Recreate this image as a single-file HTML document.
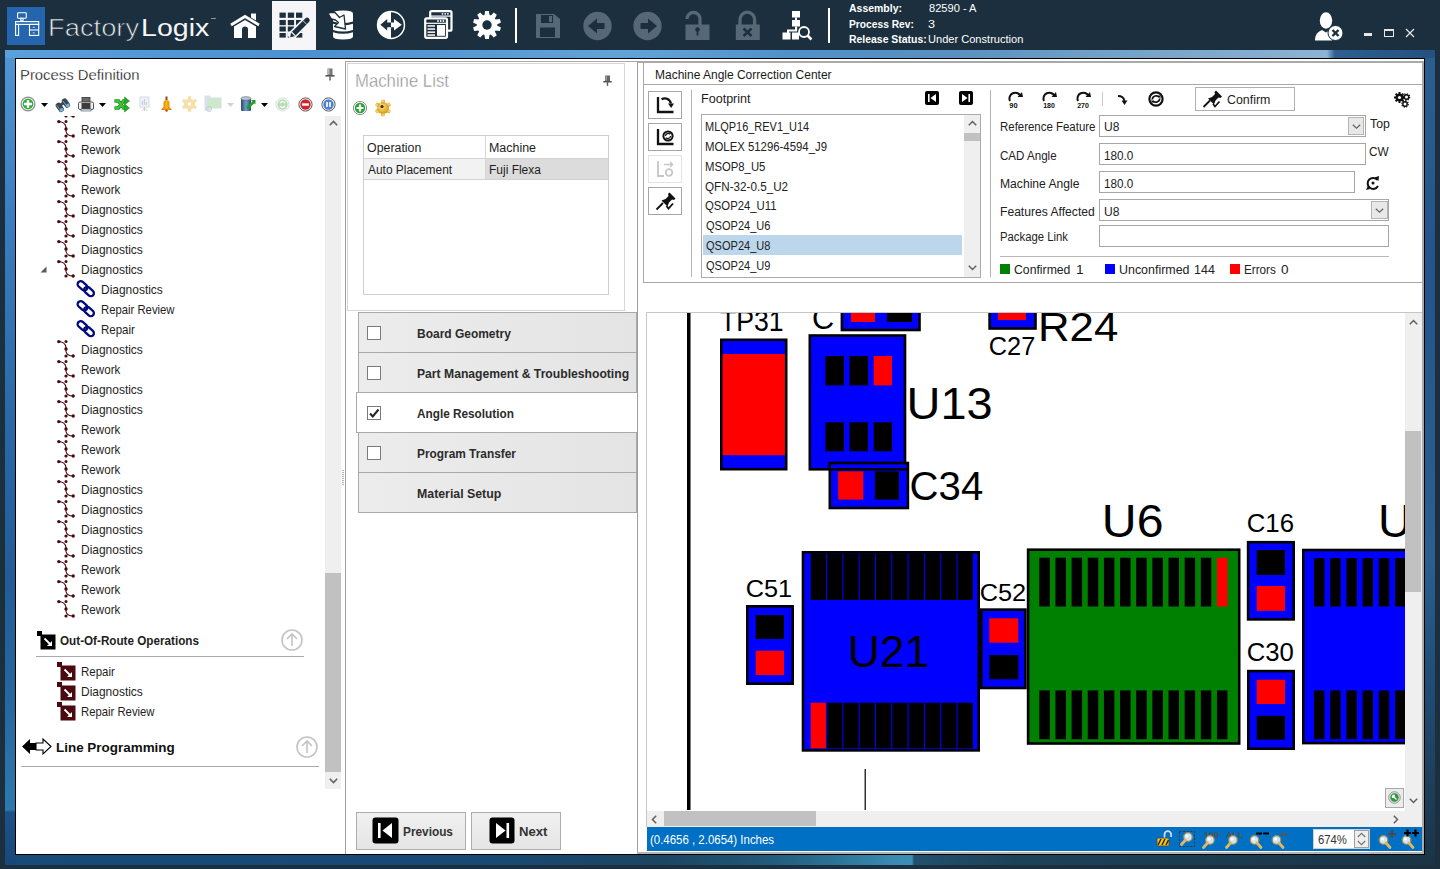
<!DOCTYPE html>
<html><head><meta charset="utf-8">
<style>
*{margin:0;padding:0;box-sizing:border-box}
html,body{width:1440px;height:869px;overflow:hidden;background:#1b2f3e;font-family:"Liberation Sans",sans-serif;color:#1e1e1e}
.a{position:absolute}
.t{position:absolute;white-space:nowrap;line-height:1}
svg{position:absolute;overflow:visible}
</style></head><body>

<!-- ===== TOP BAR ===== -->
<div class="a" style="left:7px;top:7px;width:38px;height:38px;background:#2465ae"></div>
<svg style="left:7px;top:7px" width="38" height="38" viewBox="0 0 38 38">
  <g fill="none" stroke="#fff" stroke-width="1.1">
    <rect x="10.6" y="5.7" width="8.7" height="5.6" rx="0.8"/>
    <rect x="13.8" y="11.3" width="2.2" height="2.6"/>
    <rect x="8.6" y="14.6" width="23.1" height="2.8"/>
    <rect x="8.6" y="17.4" width="3" height="11"/>
    <rect x="22.5" y="17.4" width="9.2" height="11"/>
    <path d="M22.5 23h9.2"/>
  </g>
  <g fill="#fff" opacity="0.8"><rect x="25.8" y="19.8" width="2" height="0.9"/><rect x="25.8" y="25.4" width="2" height="0.9"/></g>
</svg>


<!-- home -->
<svg style="left:230px;top:13px" width="30" height="26" viewBox="0 0 30 26">
  <path fill="#fff" d="M21 0.5h5v7l-5-3z"/>
  <path fill="none" stroke="#fff" stroke-width="2.8" d="M1 12L15 3.5 29 12"/>
  <path fill="#fff" d="M4 13.5L15 7l11 6.5V25h-8v-8.5a3 3 0 0 0-6 0V25H4z"/>
</svg>
<!-- selected tab -->
<div class="a" style="left:272px;top:1px;width:44px;height:49px;background:#f6f6f9"></div>
<svg style="left:279px;top:12px" width="32" height="28" viewBox="0 0 32 28">
  <g fill="#1b2f3e">
    <rect x="0.5" y="0.6" width="6.3" height="5.2"/><rect x="8.8" y="0.6" width="6.3" height="5.2"/><rect x="17" y="0.6" width="6.3" height="5.2"/>
    <rect x="0.5" y="8" width="6.3" height="5.2"/><rect x="8.8" y="8" width="6.3" height="5.2"/><rect x="17" y="8" width="6.3" height="5.2"/>
    <rect x="0.5" y="14.5" width="6.3" height="5"/><rect x="8.8" y="14.5" width="6.3" height="5"/><rect x="17" y="14.5" width="6.3" height="5"/>
    <rect x="0.5" y="21" width="6.3" height="4.6"/><rect x="8.8" y="21" width="6.3" height="4.6"/><rect x="17" y="21" width="6.3" height="4.6"/>
  </g>
  <g transform="translate(20.2 16.2) rotate(-45)">
    <rect x="-13.5" y="-4.2" width="27" height="8.4" rx="2" fill="#f6f6f9"/>
    <path d="M-8 -2.6H11.2a1.8 1.8 0 0 1 0 5.2H-8z" fill="#1b2f3e"/>
    <path d="M-8.8 -2.6L-12.8 0 -8.8 2.6z" fill="#1b2f3e"/>
    <path d="M-7.8 -2.6v5.2" stroke="#f6f6f9" stroke-width="0.8"/>
    <path d="M8 -2.6v5.2" stroke="#f6f6f9" stroke-width="0.8"/>
  </g>
</svg>
<!-- database w/ arrow -->
<svg style="left:326px;top:9px" width="30" height="32" viewBox="0 0 30 32">
  <path fill="#fff" d="M7 4.5Q7 1.5 17 1.5Q27 1.5 27 4.5V12.5Q17 15.5 7 12.5z"/>
  <path fill="#fff" d="M7 14.8Q17 17.8 27 14.8V21Q17 24 7 21z"/>
  <path fill="#fff" d="M7 23.3Q17 26.3 27 23.3V27.5Q27 30.5 17 30.5Q7 30.5 7 27.5z"/>
  <path fill="#fff" stroke="#1b2f3e" stroke-width="1.3" stroke-linejoin="round" d="M2.5 3.5L9 3.5 13.5 8.5 18 6 19.5 20 8.5 17.5 12.5 13.5 9.5 11 5.5 10 3 6z"/>
</svg>
<!-- circle arrows -->
<svg style="left:376px;top:10px" width="30" height="30" viewBox="0 0 30 30">
  <circle cx="15" cy="15" r="14.2" fill="#fff"/>
  <path fill="#1b2f3e" d="M15 2.3a12.7 12.7 0 0 1 0 25.4z"/>
  <path fill="#1b2f3e" d="M4.4 14.8L11.2 9v3.5h3.8v4.8h-3.8v3.3z"/>
  <path fill="#fff" d="M25.8 14.8L18 9v3.5h-3v4.8h3v3.3z"/>
</svg>
<!-- windows -->
<svg style="left:424px;top:10px" width="30" height="30" viewBox="0 0 30 30">
  <rect x="6.2" y="1.2" width="21.3" height="19.5" rx="1.5" fill="#1b2f3e" stroke="#fff" stroke-width="2.2"/>
  <g fill="#fff"><circle cx="18.5" cy="3.8" r="0.9"/><circle cx="21.2" cy="3.8" r="0.9"/><circle cx="23.9" cy="3.8" r="0.9"/><rect x="6.2" y="5.5" width="21.3" height="1.2"/></g>
  <rect x="1.2" y="8.3" width="21.8" height="19.5" rx="1.5" fill="#1b2f3e" stroke="#fff" stroke-width="2.2"/>
  <g fill="#fff"><circle cx="14" cy="11" r="0.9"/><circle cx="16.7" cy="11" r="0.9"/><circle cx="19.4" cy="11" r="0.9"/><rect x="1.2" y="12.7" width="21.8" height="1.2"/></g>
  <g fill="#fff"><rect x="3.5" y="15.2" width="7.5" height="1.5"/><rect x="3.5" y="18.3" width="7.5" height="1.5"/><rect x="3.5" y="21.4" width="7.5" height="1.5"/><rect x="3.5" y="24.3" width="7.5" height="1.5"/><rect x="13" y="15" width="8" height="10.8"/></g>
</svg>
<!-- gear -->
<svg style="left:472px;top:10px" width="30" height="30" viewBox="0 0 30 30">
  <path fill="#fff" d="M12.43 5.34 L13.16 0.92 L16.84 0.92 L17.57 5.34 L18.60 5.67 L21.79 2.53 L24.77 4.69 L22.76 8.69 L23.40 9.57 L27.82 8.90 L28.96 12.40 L24.99 14.46 L24.99 15.54 L28.96 17.60 L27.82 21.10 L23.40 20.43 L22.76 21.31 L24.77 25.31 L21.79 27.47 L18.60 24.33 L17.57 24.66 L16.84 29.08 L13.16 29.08 L12.43 24.66 L11.40 24.33 L8.21 27.47 L5.23 25.31 L7.24 21.31 L6.60 20.43 L2.18 21.10 L1.04 17.60 L5.01 15.54 L5.01 14.46 L1.04 12.40 L2.18 8.90 L6.60 9.57 L7.24 8.69 L5.23 4.69 L8.21 2.53 L11.40 5.67z"/>
  <circle cx="15" cy="15" r="10.2" fill="#fff"/>
  <circle cx="15" cy="15" r="4.7" fill="#1b2f3e"/>
</svg>
<div class="a" style="left:515px;top:8px;width:2px;height:35px;background:#fff"></div>
<!-- disabled: save -->
<svg style="left:535px;top:13px" width="26" height="26" viewBox="0 0 26 26">
  <path fill="#566875" d="M1 1h18l6 5v19H1z"/>
  <rect x="6" y="2" width="12" height="8" fill="#1b2f3e"/><rect x="14" y="3" width="3" height="6" fill="#566875"/>
  <rect x="5" y="14.5" width="15" height="9.5" fill="#1b2f3e"/>
</svg>
<svg style="left:583px;top:11px" width="30" height="30" viewBox="0 0 30 30">
  <circle cx="14.5" cy="15" r="14.2" fill="#566875"/>
  <path fill="#1b2f3e" d="M5 15l9-7.5v4.5h7.5v6h-7.5v4.5z"/>
</svg>
<svg style="left:632px;top:11px" width="30" height="30" viewBox="0 0 30 30">
  <circle cx="15.5" cy="15" r="14.2" fill="#566875"/>
  <path fill="#1b2f3e" d="M25 15l-9-7.5v4.5H8.5v6H16v4.5z"/>
</svg>
<!-- unlock -->
<svg style="left:685px;top:10px" width="26" height="30" viewBox="0 0 26 30">
  <path fill="none" stroke="#566875" stroke-width="3.3" d="M2 9a6.5 6.5 0 0 1 13 0v6"/>
  <rect x="0.5" y="14.5" width="24" height="15.5" fill="#566875"/>
  <circle cx="12.5" cy="19.5" r="2.3" fill="#1b2f3e"/><rect x="11.6" y="20" width="1.8" height="5.5" fill="#1b2f3e"/>
</svg>
<svg style="left:735px;top:10px" width="26" height="30" viewBox="0 0 26 30">
  <path fill="none" stroke="#566875" stroke-width="3.3" d="M5 15V9.5a7.3 7.3 0 0 1 14.6 0V15"/>
  <rect x="0.8" y="14.5" width="24" height="15.5" fill="#566875"/>
  <path stroke="#1b2f3e" stroke-width="2.6" d="M8.5 18.5l8 7.5M16.5 18.5l-8 7.5"/>
</svg>
<!-- org search -->
<svg style="left:782px;top:10px" width="32" height="30" viewBox="0 0 32 30">
  <g fill="#fff">
    <rect x="10" y="1" width="8" height="6.5"/><rect x="13" y="7.5" width="2" height="2.5"/>
    <rect x="10" y="10" width="8" height="6.5"/><rect x="13" y="16.5" width="2.2" height="4"/>
    <rect x="5" y="19.5" width="10" height="2"/><rect x="5" y="21" width="2" height="2.5"/>
    <rect x="0.5" y="22.5" width="8" height="7"/><rect x="10" y="22.5" width="7" height="7"/>
  </g>
  <circle cx="22" cy="22" r="5" fill="#1b2f3e" stroke="#fff" stroke-width="1.8"/>
  <path stroke="#fff" stroke-width="2.5" d="M25.5 25.5l4 4"/>
</svg>
<div class="a" style="left:828px;top:8px;width:2px;height:35px;background:#fff"></div>

<!-- user -->
<svg style="left:1315px;top:12px" width="30" height="30" viewBox="0 0 30 30">
  <ellipse cx="11" cy="8.5" rx="6.2" ry="8.3" fill="#fff"/>
  <path fill="#fff" d="M0 28.5c0-6 3-9 7-10.5l4 2.5 4-2.5c3 1 5 3 6 6l-4 4.5z"/>
  <circle cx="20.5" cy="21" r="7.5" fill="#fff" stroke="#1b2f3e" stroke-width="1"/>
  <path stroke="#1b2f3e" stroke-width="2.4" d="M17.5 18l6 6M23.5 18l-6 6"/>
</svg>
<div class="a" style="left:1364px;top:33px;width:8px;height:3px;background:#e6e6e6"></div>
<div class="a" style="left:1384px;top:29px;width:10px;height:8px;border:1px solid #e6e6e6;border-top-width:2px"></div>
<svg style="left:1405px;top:28px" width="10" height="10" viewBox="0 0 10 10"><path stroke="#e6e6e6" stroke-width="1.2" d="M1 1l8 8M9 1l-8 8"/></svg>

<!-- ===== FRAME ===== -->
<div class="a" style="left:5px;top:50px;width:1430px;height:8px;background:linear-gradient(90deg,#5aa0db 0px,#4b90d0 300px,#62a3d7 620px,#5090ca 795px,#5a90bf 950px,#72a1c7 1100px,#8bb3d4 1322px,#2e5f8f 1330px,#24517f 1430px)"></div>
<div class="a" style="left:5px;top:58px;width:10px;height:807px;background:linear-gradient(180deg,#4f95d3 0px,#3a7fc2 150px,#2a6aa8 350px,#225c98 520px,#25679f 640px,#2c79ad 752px,#1d5189 754px,#184878 807px)"></div>
<div class="a" style="left:1425px;top:58px;width:10px;height:807px;background:linear-gradient(180deg,#2b5e8f 0px,#24548a 200px,#2a5f90 500px,#21507c 600px,#1c3a52 760px,#1b3446 807px)"></div>
<div class="a" style="left:15px;top:855px;width:1410px;height:10px;background:linear-gradient(90deg,#184a7a 0px,#194a76 450px,#1b4562 640px,#1f5676 740px,#2c7398 820px,#3a8bb3 880px,#3c8eb6 897px,#21506e 899px,#1c4259 1000px,#1a3548 1410px)"></div>
<div class="a" style="left:15px;top:58px;width:1410px;height:797px;background:#fff;border:1px solid #000"></div>

<div class="t" style="left:47.81px;top:16.00px;font-size:24.4px;color:#e6ebef;transform:scaleX(1.1206);transform-origin:0 0;-webkit-text-stroke:0.7px #1b2f3e;">Factory</div>
<div class="t" style="left:141.01px;top:16.00px;font-size:24.4px;color:#f4f6f8;transform:scaleX(1.1707);transform-origin:0 0;">Logix</div>
<div class="a" style="left:211px;top:18px;width:5px;height:1px;background:#8a98a4"></div>
<div class="t" style="left:848.94px;top:3.00px;font-size:11px;font-weight:bold;color:#fff;transform:scaleX(0.9524);transform-origin:0 0;">Assembly:</div>
<div class="t" style="left:848.53px;top:19.00px;font-size:11px;font-weight:bold;color:#fff;transform:scaleX(0.9304);transform-origin:0 0;">Process Rev:</div>
<div class="t" style="left:848.52px;top:34.00px;font-size:11px;font-weight:bold;color:#fff;transform:scaleX(0.9484);transform-origin:0 0;">Release Status:</div>
<div class="t" style="left:928.50px;top:3.00px;font-size:11.5px;color:#fff;transform:scaleX(0.9650);transform-origin:0 0;">82590 - A</div>
<div class="t" style="left:928.49px;top:19.00px;font-size:11.5px;color:#fff;transform:scaleX(1.0984);transform-origin:0 0;">3</div>
<div class="t" style="left:928.17px;top:34.00px;font-size:11.5px;color:#fff;transform:scaleX(0.9624);transform-origin:0 0;">Under Construction</div>
<div class="t" style="left:19.81px;top:68.00px;font-size:14.8px;color:#000;transform:scaleX(1.0031);transform-origin:0 0;-webkit-text-stroke:0.3px #fff;">Process Definition</div>
<svg style="left:325px;top:68px" width="10" height="13" viewBox="0 0 10 13"><rect x="2.5" y="0.5" width="5" height="6.5" fill="#777"/><rect x="3" y="1" width="1.5" height="5.5" fill="#bbb"/><rect x="0.5" y="7" width="9" height="1.6" fill="#555"/><rect x="4.3" y="8.5" width="1.4" height="4" fill="#555"/></svg>
<svg style="left:20px;top:96px" width="16" height="16" viewBox="0 0 16 16"><circle cx="8" cy="8" r="6.9" fill="#fff" stroke="#8c8c8c" stroke-width="1.3"/><circle cx="8" cy="8" r="5.4" fill="#2fae3a"/><path d="M8 4v8M4 8h8" stroke="#fff" stroke-width="2.4"/></svg>
<svg style="left:41px;top:103px" width="7" height="4" viewBox="0 0 7 4"><path d="M0 0h7L3.5 4z" fill="#000"/></svg>
<svg style="left:55px;top:97px" width="16" height="15" viewBox="0 0 16 15"><g transform="rotate(-35 8 7.5)"><rect x="1" y="3" width="5.5" height="10" rx="2.5" fill="#3a4650"/><rect x="8.5" y="3" width="5.5" height="10" rx="2.5" fill="#3a4650"/><rect x="5.5" y="5" width="4" height="3" fill="#3a4650"/><ellipse cx="3.75" cy="11" rx="2.2" ry="1.6" fill="#6fb7ea"/><ellipse cx="11.25" cy="11" rx="2.2" ry="1.6" fill="#6fb7ea"/><path d="M2.5 4.5v5M10 4.5v5" stroke="#9aa6b0" stroke-width="0.8"/></g></svg>
<svg style="left:78px;top:97px" width="16" height="15" viewBox="0 0 16 15"><rect x="4" y="0.5" width="8" height="5" fill="#6a6a6a" stroke="#333" stroke-width="0.8"/><rect x="0.5" y="5" width="15" height="7.5" rx="1.5" fill="#f2f2f2" stroke="#444" stroke-width="0.9"/><rect x="3.5" y="6" width="9" height="6" fill="#3c3c3c"/><rect x="3" y="12" width="10" height="2" fill="#cdebf7" stroke="#555" stroke-width="0.6"/></svg>
<svg style="left:99px;top:103px" width="7" height="4" viewBox="0 0 7 4"><path d="M0 0h7L3.5 4z" fill="#000"/></svg>
<svg style="left:113px;top:96px" width="17" height="17" viewBox="0 0 17 17"><path d="M1.5 5h4l5 7h2M1.5 12h4l5-7h2" stroke="#1f8f1f" stroke-width="3.6" fill="none"/><path d="M1.5 5h4l5 7h2M1.5 12h4l5-7h2" stroke="#3cc23c" stroke-width="2" fill="none"/><path d="M11.5 1l5 4-5 4zM11.5 8l5 4-5 4z" fill="#2aa82a" stroke="#1f8f1f" stroke-width="0.6"/></svg>
<svg style="left:139px;top:96px" width="11" height="16" viewBox="0 0 11 16"><rect x="1" y="1" width="9" height="10" fill="#eef3f8" stroke="#d5dde6"/><path d="M3.5 9V5M5.5 9V3M7.5 9V6" stroke="#c7d3df" stroke-width="1.3"/><path d="M5.5 11v4M2.5 15l3-3 3 3" stroke="#ccc" fill="none"/></svg>
<svg style="left:160px;top:96px" width="13" height="16" viewBox="0 0 13 16"><defs><linearGradient id="bl" x1="0" x2="1"><stop offset="0" stop-color="#c86a00"/><stop offset="0.5" stop-color="#ffb21a"/><stop offset="1" stop-color="#d47000"/></linearGradient></defs><rect x="5.5" y="0.5" width="2" height="4" fill="#8a4b1a"/><path d="M3.5 11V7a3 3 0 0 1 6 0v4l2.5 3H1z" fill="url(#bl)"/><circle cx="6.5" cy="14.5" r="1.3" fill="#a85a00"/></svg>
<svg style="left:181px;top:96px" width="17" height="16" viewBox="0 0 17 16"><g transform="translate(8.5 8)" fill="#f6dfab"><circle r="5.6"/><g id="lg"><rect x="-1.6" y="-7.8" width="3.2" height="3.5"/></g><use href="#lg" transform="rotate(60)"/><use href="#lg" transform="rotate(120)"/><use href="#lg" transform="rotate(180)"/><use href="#lg" transform="rotate(240)"/><use href="#lg" transform="rotate(300)"/></g><circle cx="8.5" cy="8" r="1.8" fill="#fff"/></svg>
<svg style="left:204px;top:95px" width="18" height="17" viewBox="0 0 18 17"><rect x="0.5" y="0.5" width="6" height="15" fill="#d7e2ee"/><rect x="4" y="3" width="13" height="10" fill="#cbeac9" stroke="#d6dde4"/><circle cx="5" cy="14" r="2.5" fill="none" stroke="#ccc"/></svg>
<svg style="left:227px;top:103px" width="7" height="4" viewBox="0 0 7 4"><path d="M0 0h7L3.5 4z" fill="#d0d0d0"/></svg>
<svg style="left:240px;top:96px" width="16" height="16" viewBox="0 0 16 16"><defs><linearGradient id="db" x1="0" x2="1"><stop offset="0" stop-color="#2d4a6a"/><stop offset="0.5" stop-color="#6aa0d0"/><stop offset="1" stop-color="#2a4d70"/></linearGradient></defs><rect x="1" y="2" width="10" height="13" rx="1" fill="url(#db)"/><ellipse cx="6" cy="2.5" rx="5" ry="1.8" fill="#b9c9d9" stroke="#555" stroke-width="0.6"/><path d="M7 12l7-6" stroke="#1ea01e" stroke-width="2.4"/><path d="M11 4h4.5v4.5z" fill="#1ea01e"/></svg>
<svg style="left:261px;top:103px" width="7" height="4" viewBox="0 0 7 4"><path d="M0 0h7L3.5 4z" fill="#000"/></svg>
<svg style="left:275px;top:97px" width="15" height="15" viewBox="0 0 15 15"><g opacity="0.75"><circle cx="7.5" cy="7.5" r="6.6" fill="#fff" stroke="#cfcfcf" stroke-width="1"/><circle cx="7.5" cy="7.5" r="5.2" fill="#9fd39f"/><path d="M5 6a3 3 0 0 1 5 0M10 9a3 3 0 0 1-5 0" stroke="#fff" stroke-width="1.4" fill="none"/></g></svg>
<svg style="left:298px;top:97px" width="15" height="15" viewBox="0 0 15 15"><g opacity="1"><circle cx="7.5" cy="7.5" r="6.6" fill="#fff" stroke="#555" stroke-width="1"/><circle cx="7.5" cy="7.5" r="5.2" fill="#d8202a"/><path d="M4 7.5h7" stroke="#fff" stroke-width="2.4"/></g></svg>
<svg style="left:321px;top:97px" width="15" height="15" viewBox="0 0 15 15"><g opacity="1"><circle cx="7.5" cy="7.5" r="6.6" fill="#fff" stroke="#555" stroke-width="1"/><circle cx="7.5" cy="7.5" r="5.2" fill="#4d7fd6"/><path d="M6 5v5M9 5v5" stroke="#fff" stroke-width="1.7"/></g></svg>
<div class="a" style="left:16px;top:116px;width:309px;height:511px;overflow:hidden">
<svg style="left:41px;top:-16px" width="19" height="19" viewBox="0 0 19 19"><g fill="none" stroke="#4a0a0e" stroke-width="1.1"><path d="M1.8 1.6C5 1.6 8.5 3.5 9 7.5v4C9.5 14 12 16 16.2 16"/></g><g fill="#4a0a0e"><circle cx="1.8" cy="1.6" r="1.7"/><circle cx="9" cy="1.6" r="1.5"/><circle cx="9" cy="9" r="1.7"/><circle cx="9" cy="16" r="1.6"/><circle cx="16.2" cy="16" r="1.7"/></g></svg>
<svg style="left:41px;top:4px" width="19" height="19" viewBox="0 0 19 19"><g fill="none" stroke="#4a0a0e" stroke-width="1.1"><path d="M1.8 1.6C5 1.6 8.5 3.5 9 7.5v4C9.5 14 12 16 16.2 16"/></g><g fill="#4a0a0e"><circle cx="1.8" cy="1.6" r="1.7"/><circle cx="9" cy="1.6" r="1.5"/><circle cx="9" cy="9" r="1.7"/><circle cx="9" cy="16" r="1.6"/><circle cx="16.2" cy="16" r="1.7"/></g></svg>
<div class="t" style="left:64.77px;top:8.00px;font-size:12.6px;color:#1e1e1e;transform:scaleX(0.9207);transform-origin:0 0;">Rework</div>
<svg style="left:41px;top:24px" width="19" height="19" viewBox="0 0 19 19"><g fill="none" stroke="#4a0a0e" stroke-width="1.1"><path d="M1.8 1.6C5 1.6 8.5 3.5 9 7.5v4C9.5 14 12 16 16.2 16"/></g><g fill="#4a0a0e"><circle cx="1.8" cy="1.6" r="1.7"/><circle cx="9" cy="1.6" r="1.5"/><circle cx="9" cy="9" r="1.7"/><circle cx="9" cy="16" r="1.6"/><circle cx="16.2" cy="16" r="1.7"/></g></svg>
<div class="t" style="left:64.77px;top:28.00px;font-size:12.6px;color:#1e1e1e;transform:scaleX(0.9207);transform-origin:0 0;">Rework</div>
<svg style="left:41px;top:44px" width="19" height="19" viewBox="0 0 19 19"><g fill="none" stroke="#4a0a0e" stroke-width="1.1"><path d="M1.8 1.6C5 1.6 8.5 3.5 9 7.5v4C9.5 14 12 16 16.2 16"/></g><g fill="#4a0a0e"><circle cx="1.8" cy="1.6" r="1.7"/><circle cx="9" cy="1.6" r="1.5"/><circle cx="9" cy="9" r="1.7"/><circle cx="9" cy="16" r="1.6"/><circle cx="16.2" cy="16" r="1.7"/></g></svg>
<div class="t" style="left:64.74px;top:48.00px;font-size:12.6px;color:#1e1e1e;transform:scaleX(0.9499);transform-origin:0 0;">Diagnostics</div>
<svg style="left:41px;top:64px" width="19" height="19" viewBox="0 0 19 19"><g fill="none" stroke="#4a0a0e" stroke-width="1.1"><path d="M1.8 1.6C5 1.6 8.5 3.5 9 7.5v4C9.5 14 12 16 16.2 16"/></g><g fill="#4a0a0e"><circle cx="1.8" cy="1.6" r="1.7"/><circle cx="9" cy="1.6" r="1.5"/><circle cx="9" cy="9" r="1.7"/><circle cx="9" cy="16" r="1.6"/><circle cx="16.2" cy="16" r="1.7"/></g></svg>
<div class="t" style="left:64.77px;top:68.00px;font-size:12.6px;color:#1e1e1e;transform:scaleX(0.9207);transform-origin:0 0;">Rework</div>
<svg style="left:41px;top:84px" width="19" height="19" viewBox="0 0 19 19"><g fill="none" stroke="#4a0a0e" stroke-width="1.1"><path d="M1.8 1.6C5 1.6 8.5 3.5 9 7.5v4C9.5 14 12 16 16.2 16"/></g><g fill="#4a0a0e"><circle cx="1.8" cy="1.6" r="1.7"/><circle cx="9" cy="1.6" r="1.5"/><circle cx="9" cy="9" r="1.7"/><circle cx="9" cy="16" r="1.6"/><circle cx="16.2" cy="16" r="1.7"/></g></svg>
<div class="t" style="left:64.74px;top:88.00px;font-size:12.6px;color:#1e1e1e;transform:scaleX(0.9499);transform-origin:0 0;">Diagnostics</div>
<svg style="left:41px;top:104px" width="19" height="19" viewBox="0 0 19 19"><g fill="none" stroke="#4a0a0e" stroke-width="1.1"><path d="M1.8 1.6C5 1.6 8.5 3.5 9 7.5v4C9.5 14 12 16 16.2 16"/></g><g fill="#4a0a0e"><circle cx="1.8" cy="1.6" r="1.7"/><circle cx="9" cy="1.6" r="1.5"/><circle cx="9" cy="9" r="1.7"/><circle cx="9" cy="16" r="1.6"/><circle cx="16.2" cy="16" r="1.7"/></g></svg>
<div class="t" style="left:64.74px;top:108.00px;font-size:12.6px;color:#1e1e1e;transform:scaleX(0.9499);transform-origin:0 0;">Diagnostics</div>
<svg style="left:41px;top:124px" width="19" height="19" viewBox="0 0 19 19"><g fill="none" stroke="#4a0a0e" stroke-width="1.1"><path d="M1.8 1.6C5 1.6 8.5 3.5 9 7.5v4C9.5 14 12 16 16.2 16"/></g><g fill="#4a0a0e"><circle cx="1.8" cy="1.6" r="1.7"/><circle cx="9" cy="1.6" r="1.5"/><circle cx="9" cy="9" r="1.7"/><circle cx="9" cy="16" r="1.6"/><circle cx="16.2" cy="16" r="1.7"/></g></svg>
<div class="t" style="left:64.74px;top:128.00px;font-size:12.6px;color:#1e1e1e;transform:scaleX(0.9499);transform-origin:0 0;">Diagnostics</div>
<svg style="left:41px;top:144px" width="19" height="19" viewBox="0 0 19 19"><g fill="none" stroke="#4a0a0e" stroke-width="1.1"><path d="M1.8 1.6C5 1.6 8.5 3.5 9 7.5v4C9.5 14 12 16 16.2 16"/></g><g fill="#4a0a0e"><circle cx="1.8" cy="1.6" r="1.7"/><circle cx="9" cy="1.6" r="1.5"/><circle cx="9" cy="9" r="1.7"/><circle cx="9" cy="16" r="1.6"/><circle cx="16.2" cy="16" r="1.7"/></g></svg>
<div class="t" style="left:64.74px;top:148.00px;font-size:12.6px;color:#1e1e1e;transform:scaleX(0.9499);transform-origin:0 0;">Diagnostics</div>
<svg style="left:61px;top:164px" width="20" height="18" viewBox="0 0 20 18"><g fill="none" stroke="#000a7a" stroke-width="2.3"><rect x="-5.5" y="-3.1" width="11" height="6.2" rx="3.1" transform="translate(5.5 5.8) rotate(42)"/><rect x="-5.5" y="-3.1" width="11" height="6.2" rx="3.1" transform="translate(12 11.5) rotate(42)"/></g></svg>
<div class="t" style="left:84.54px;top:168.00px;font-size:12.6px;color:#1e1e1e;transform:scaleX(0.9499);transform-origin:0 0;">Diagnostics</div>
<svg style="left:61px;top:184px" width="20" height="18" viewBox="0 0 20 18"><g fill="none" stroke="#000a7a" stroke-width="2.3"><rect x="-5.5" y="-3.1" width="11" height="6.2" rx="3.1" transform="translate(5.5 5.8) rotate(42)"/><rect x="-5.5" y="-3.1" width="11" height="6.2" rx="3.1" transform="translate(12 11.5) rotate(42)"/></g></svg>
<div class="t" style="left:84.59px;top:188.00px;font-size:12.6px;color:#1e1e1e;transform:scaleX(0.8980);transform-origin:0 0;">Repair Review</div>
<svg style="left:61px;top:204px" width="20" height="18" viewBox="0 0 20 18"><g fill="none" stroke="#000a7a" stroke-width="2.3"><rect x="-5.5" y="-3.1" width="11" height="6.2" rx="3.1" transform="translate(5.5 5.8) rotate(42)"/><rect x="-5.5" y="-3.1" width="11" height="6.2" rx="3.1" transform="translate(12 11.5) rotate(42)"/></g></svg>
<div class="t" style="left:84.58px;top:208.00px;font-size:12.6px;color:#1e1e1e;transform:scaleX(0.9134);transform-origin:0 0;">Repair</div>
<svg style="left:41px;top:224px" width="19" height="19" viewBox="0 0 19 19"><g fill="none" stroke="#4a0a0e" stroke-width="1.1"><path d="M1.8 1.6C5 1.6 8.5 3.5 9 7.5v4C9.5 14 12 16 16.2 16"/></g><g fill="#4a0a0e"><circle cx="1.8" cy="1.6" r="1.7"/><circle cx="9" cy="1.6" r="1.5"/><circle cx="9" cy="9" r="1.7"/><circle cx="9" cy="16" r="1.6"/><circle cx="16.2" cy="16" r="1.7"/></g></svg>
<div class="t" style="left:64.74px;top:228.00px;font-size:12.6px;color:#1e1e1e;transform:scaleX(0.9499);transform-origin:0 0;">Diagnostics</div>
<svg style="left:41px;top:244px" width="19" height="19" viewBox="0 0 19 19"><g fill="none" stroke="#4a0a0e" stroke-width="1.1"><path d="M1.8 1.6C5 1.6 8.5 3.5 9 7.5v4C9.5 14 12 16 16.2 16"/></g><g fill="#4a0a0e"><circle cx="1.8" cy="1.6" r="1.7"/><circle cx="9" cy="1.6" r="1.5"/><circle cx="9" cy="9" r="1.7"/><circle cx="9" cy="16" r="1.6"/><circle cx="16.2" cy="16" r="1.7"/></g></svg>
<div class="t" style="left:64.77px;top:248.00px;font-size:12.6px;color:#1e1e1e;transform:scaleX(0.9207);transform-origin:0 0;">Rework</div>
<svg style="left:41px;top:264px" width="19" height="19" viewBox="0 0 19 19"><g fill="none" stroke="#4a0a0e" stroke-width="1.1"><path d="M1.8 1.6C5 1.6 8.5 3.5 9 7.5v4C9.5 14 12 16 16.2 16"/></g><g fill="#4a0a0e"><circle cx="1.8" cy="1.6" r="1.7"/><circle cx="9" cy="1.6" r="1.5"/><circle cx="9" cy="9" r="1.7"/><circle cx="9" cy="16" r="1.6"/><circle cx="16.2" cy="16" r="1.7"/></g></svg>
<div class="t" style="left:64.74px;top:268.00px;font-size:12.6px;color:#1e1e1e;transform:scaleX(0.9499);transform-origin:0 0;">Diagnostics</div>
<svg style="left:41px;top:284px" width="19" height="19" viewBox="0 0 19 19"><g fill="none" stroke="#4a0a0e" stroke-width="1.1"><path d="M1.8 1.6C5 1.6 8.5 3.5 9 7.5v4C9.5 14 12 16 16.2 16"/></g><g fill="#4a0a0e"><circle cx="1.8" cy="1.6" r="1.7"/><circle cx="9" cy="1.6" r="1.5"/><circle cx="9" cy="9" r="1.7"/><circle cx="9" cy="16" r="1.6"/><circle cx="16.2" cy="16" r="1.7"/></g></svg>
<div class="t" style="left:64.74px;top:288.00px;font-size:12.6px;color:#1e1e1e;transform:scaleX(0.9499);transform-origin:0 0;">Diagnostics</div>
<svg style="left:41px;top:304px" width="19" height="19" viewBox="0 0 19 19"><g fill="none" stroke="#4a0a0e" stroke-width="1.1"><path d="M1.8 1.6C5 1.6 8.5 3.5 9 7.5v4C9.5 14 12 16 16.2 16"/></g><g fill="#4a0a0e"><circle cx="1.8" cy="1.6" r="1.7"/><circle cx="9" cy="1.6" r="1.5"/><circle cx="9" cy="9" r="1.7"/><circle cx="9" cy="16" r="1.6"/><circle cx="16.2" cy="16" r="1.7"/></g></svg>
<div class="t" style="left:64.77px;top:308.00px;font-size:12.6px;color:#1e1e1e;transform:scaleX(0.9207);transform-origin:0 0;">Rework</div>
<svg style="left:41px;top:324px" width="19" height="19" viewBox="0 0 19 19"><g fill="none" stroke="#4a0a0e" stroke-width="1.1"><path d="M1.8 1.6C5 1.6 8.5 3.5 9 7.5v4C9.5 14 12 16 16.2 16"/></g><g fill="#4a0a0e"><circle cx="1.8" cy="1.6" r="1.7"/><circle cx="9" cy="1.6" r="1.5"/><circle cx="9" cy="9" r="1.7"/><circle cx="9" cy="16" r="1.6"/><circle cx="16.2" cy="16" r="1.7"/></g></svg>
<div class="t" style="left:64.77px;top:328.00px;font-size:12.6px;color:#1e1e1e;transform:scaleX(0.9207);transform-origin:0 0;">Rework</div>
<svg style="left:41px;top:344px" width="19" height="19" viewBox="0 0 19 19"><g fill="none" stroke="#4a0a0e" stroke-width="1.1"><path d="M1.8 1.6C5 1.6 8.5 3.5 9 7.5v4C9.5 14 12 16 16.2 16"/></g><g fill="#4a0a0e"><circle cx="1.8" cy="1.6" r="1.7"/><circle cx="9" cy="1.6" r="1.5"/><circle cx="9" cy="9" r="1.7"/><circle cx="9" cy="16" r="1.6"/><circle cx="16.2" cy="16" r="1.7"/></g></svg>
<div class="t" style="left:64.77px;top:348.00px;font-size:12.6px;color:#1e1e1e;transform:scaleX(0.9207);transform-origin:0 0;">Rework</div>
<svg style="left:41px;top:364px" width="19" height="19" viewBox="0 0 19 19"><g fill="none" stroke="#4a0a0e" stroke-width="1.1"><path d="M1.8 1.6C5 1.6 8.5 3.5 9 7.5v4C9.5 14 12 16 16.2 16"/></g><g fill="#4a0a0e"><circle cx="1.8" cy="1.6" r="1.7"/><circle cx="9" cy="1.6" r="1.5"/><circle cx="9" cy="9" r="1.7"/><circle cx="9" cy="16" r="1.6"/><circle cx="16.2" cy="16" r="1.7"/></g></svg>
<div class="t" style="left:64.74px;top:368.00px;font-size:12.6px;color:#1e1e1e;transform:scaleX(0.9499);transform-origin:0 0;">Diagnostics</div>
<svg style="left:41px;top:384px" width="19" height="19" viewBox="0 0 19 19"><g fill="none" stroke="#4a0a0e" stroke-width="1.1"><path d="M1.8 1.6C5 1.6 8.5 3.5 9 7.5v4C9.5 14 12 16 16.2 16"/></g><g fill="#4a0a0e"><circle cx="1.8" cy="1.6" r="1.7"/><circle cx="9" cy="1.6" r="1.5"/><circle cx="9" cy="9" r="1.7"/><circle cx="9" cy="16" r="1.6"/><circle cx="16.2" cy="16" r="1.7"/></g></svg>
<div class="t" style="left:64.74px;top:388.00px;font-size:12.6px;color:#1e1e1e;transform:scaleX(0.9499);transform-origin:0 0;">Diagnostics</div>
<svg style="left:41px;top:404px" width="19" height="19" viewBox="0 0 19 19"><g fill="none" stroke="#4a0a0e" stroke-width="1.1"><path d="M1.8 1.6C5 1.6 8.5 3.5 9 7.5v4C9.5 14 12 16 16.2 16"/></g><g fill="#4a0a0e"><circle cx="1.8" cy="1.6" r="1.7"/><circle cx="9" cy="1.6" r="1.5"/><circle cx="9" cy="9" r="1.7"/><circle cx="9" cy="16" r="1.6"/><circle cx="16.2" cy="16" r="1.7"/></g></svg>
<div class="t" style="left:64.74px;top:408.00px;font-size:12.6px;color:#1e1e1e;transform:scaleX(0.9499);transform-origin:0 0;">Diagnostics</div>
<svg style="left:41px;top:424px" width="19" height="19" viewBox="0 0 19 19"><g fill="none" stroke="#4a0a0e" stroke-width="1.1"><path d="M1.8 1.6C5 1.6 8.5 3.5 9 7.5v4C9.5 14 12 16 16.2 16"/></g><g fill="#4a0a0e"><circle cx="1.8" cy="1.6" r="1.7"/><circle cx="9" cy="1.6" r="1.5"/><circle cx="9" cy="9" r="1.7"/><circle cx="9" cy="16" r="1.6"/><circle cx="16.2" cy="16" r="1.7"/></g></svg>
<div class="t" style="left:64.74px;top:428.00px;font-size:12.6px;color:#1e1e1e;transform:scaleX(0.9499);transform-origin:0 0;">Diagnostics</div>
<svg style="left:41px;top:444px" width="19" height="19" viewBox="0 0 19 19"><g fill="none" stroke="#4a0a0e" stroke-width="1.1"><path d="M1.8 1.6C5 1.6 8.5 3.5 9 7.5v4C9.5 14 12 16 16.2 16"/></g><g fill="#4a0a0e"><circle cx="1.8" cy="1.6" r="1.7"/><circle cx="9" cy="1.6" r="1.5"/><circle cx="9" cy="9" r="1.7"/><circle cx="9" cy="16" r="1.6"/><circle cx="16.2" cy="16" r="1.7"/></g></svg>
<div class="t" style="left:64.77px;top:448.00px;font-size:12.6px;color:#1e1e1e;transform:scaleX(0.9207);transform-origin:0 0;">Rework</div>
<svg style="left:41px;top:464px" width="19" height="19" viewBox="0 0 19 19"><g fill="none" stroke="#4a0a0e" stroke-width="1.1"><path d="M1.8 1.6C5 1.6 8.5 3.5 9 7.5v4C9.5 14 12 16 16.2 16"/></g><g fill="#4a0a0e"><circle cx="1.8" cy="1.6" r="1.7"/><circle cx="9" cy="1.6" r="1.5"/><circle cx="9" cy="9" r="1.7"/><circle cx="9" cy="16" r="1.6"/><circle cx="16.2" cy="16" r="1.7"/></g></svg>
<div class="t" style="left:64.77px;top:468.00px;font-size:12.6px;color:#1e1e1e;transform:scaleX(0.9207);transform-origin:0 0;">Rework</div>
<svg style="left:41px;top:484px" width="19" height="19" viewBox="0 0 19 19"><g fill="none" stroke="#4a0a0e" stroke-width="1.1"><path d="M1.8 1.6C5 1.6 8.5 3.5 9 7.5v4C9.5 14 12 16 16.2 16"/></g><g fill="#4a0a0e"><circle cx="1.8" cy="1.6" r="1.7"/><circle cx="9" cy="1.6" r="1.5"/><circle cx="9" cy="9" r="1.7"/><circle cx="9" cy="16" r="1.6"/><circle cx="16.2" cy="16" r="1.7"/></g></svg>
<div class="t" style="left:64.77px;top:488.00px;font-size:12.6px;color:#1e1e1e;transform:scaleX(0.9207);transform-origin:0 0;">Rework</div>
<svg style="left:24px;top:150px" width="7" height="7" viewBox="0 0 7 7"><path d="M6.5 0.5V6.5H0.5z" fill="#5a5a5a"/></svg>
</div>
<svg style="left:37px;top:631px" width="19" height="19" viewBox="0 0 19 19"><rect x="0" y="0" width="5" height="5" fill="#000"/><rect x="3.5" y="3.5" width="15" height="15" fill="#000"/><path d="M7.5 7.5l6 6" stroke="#fff" stroke-width="1.8"/><path d="M15 10v5h-5z" fill="#fff"/></svg>
<div class="t" style="left:59.93px;top:635.00px;font-size:12px;font-weight:bold;color:#1e1e1e;transform:scaleX(0.9742);transform-origin:0 0;">Out-Of-Route Operations</div>
<svg style="left:281px;top:629px" width="22" height="22" viewBox="0 0 22 22"><circle cx="11" cy="11" r="10" fill="none" stroke="#c4c4c4" stroke-width="1.6"/><path d="M11 17V5.5M6 10l5-5 5 5" fill="none" stroke="#c4c4c4" stroke-width="1.6"/></svg>
<div class="a" style="left:36px;top:656px;width:268px;height:1px;background:#a9a9a9"></div>
<svg style="left:57px;top:662px" width="19" height="19" viewBox="0 0 19 19"><rect x="0" y="0" width="5" height="5" fill="#4a0a0e"/><rect x="3.5" y="3.5" width="15" height="15" fill="#4a0a0e"/><path d="M7.5 7.5l6 6" stroke="#fff" stroke-width="1.8"/><path d="M15 10v5h-5z" fill="#fff"/></svg>
<div class="t" style="left:80.58px;top:666.00px;font-size:12.6px;color:#1e1e1e;transform:scaleX(0.9134);transform-origin:0 0;">Repair</div>
<svg style="left:57px;top:682px" width="19" height="19" viewBox="0 0 19 19"><rect x="0" y="0" width="5" height="5" fill="#4a0a0e"/><rect x="3.5" y="3.5" width="15" height="15" fill="#4a0a0e"/><path d="M7.5 7.5l6 6" stroke="#fff" stroke-width="1.8"/><path d="M15 10v5h-5z" fill="#fff"/></svg>
<div class="t" style="left:80.54px;top:686.00px;font-size:12.6px;color:#1e1e1e;transform:scaleX(0.9499);transform-origin:0 0;">Diagnostics</div>
<svg style="left:57px;top:702px" width="19" height="19" viewBox="0 0 19 19"><rect x="0" y="0" width="5" height="5" fill="#4a0a0e"/><rect x="3.5" y="3.5" width="15" height="15" fill="#4a0a0e"/><path d="M7.5 7.5l6 6" stroke="#fff" stroke-width="1.8"/><path d="M15 10v5h-5z" fill="#fff"/></svg>
<div class="t" style="left:80.59px;top:706.00px;font-size:12.6px;color:#1e1e1e;transform:scaleX(0.8980);transform-origin:0 0;">Repair Review</div>
<svg style="left:21px;top:738px" width="31" height="17" viewBox="0 0 31 17"><path d="M1 8.5l8-7.5v4h7v7H9v4z" fill="#000"/><path d="M30 8.5l-8-7.5v4h-7v7h7v4z" fill="#fff" stroke="#000" stroke-width="1.1"/></svg>
<div class="t" style="left:56.13px;top:741.00px;font-size:13.5px;font-weight:bold;color:#111;transform:scaleX(0.9956);transform-origin:0 0;">Line Programming</div>
<svg style="left:296px;top:736px" width="22" height="22" viewBox="0 0 22 22"><circle cx="11" cy="11" r="10" fill="none" stroke="#c4c4c4" stroke-width="1.6"/><path d="M11 17V5.5M6 10l5-5 5 5" fill="none" stroke="#c4c4c4" stroke-width="1.6"/></svg>
<div class="a" style="left:21px;top:766px;width:298px;height:1px;background:#a9a9a9"></div>
<div class="a" style="left:325px;top:116px;width:16px;height:673px;background:#efefef"></div>
<div class="a" style="left:325px;top:573px;width:16px;height:199px;background:#c1c1c1"></div>
<svg style="left:329px;top:120px" width="9" height="6" viewBox="0 0 9 6"><path d="M0.8 5.2L4.5 1.5 8.2 5.2" fill="none" stroke="#606060" stroke-width="1.6"/></svg>
<svg style="left:329px;top:778px" width="9" height="6" viewBox="0 0 9 6"><path d="M0.8 0.8L4.5 4.5 8.2 0.8" fill="none" stroke="#606060" stroke-width="1.6"/></svg>
<div class="a" style="left:345px;top:61px;width:1px;height:793px;background:#a0a0a0"></div>
<svg style="left:342px;top:470px" width="3" height="16" viewBox="0 0 3 16"><rect x="0" y="0" width="2" height="1" fill="#b0b0b0"/><rect x="0" y="2" width="2" height="1" fill="#b0b0b0"/><rect x="0" y="4" width="2" height="1" fill="#b0b0b0"/><rect x="0" y="6" width="2" height="1" fill="#b0b0b0"/><rect x="0" y="8" width="2" height="1" fill="#b0b0b0"/><rect x="0" y="10" width="2" height="1" fill="#b0b0b0"/><rect x="0" y="12" width="2" height="1" fill="#b0b0b0"/><rect x="0" y="14" width="2" height="1" fill="#b0b0b0"/></svg>
<div class="a" style="left:345px;top:61px;width:292px;height:1px;background:#a9a9a9"></div>
<div class="a" style="left:637px;top:61px;width:787px;height:2px;background:#a9a9a9"></div>
<div class="a" style="left:637px;top:61px;width:1px;height:793px;background:#a0a0a0"></div>
<div class="a" style="left:347px;top:63px;width:278px;height:248px;border:1px solid #d6d6d6;background:#fff"></div>
<div class="t" style="left:355.26px;top:73.00px;font-size:17.8px;color:#8a8a8a;transform:scaleX(0.9406);transform-origin:0 0;-webkit-text-stroke:0.4px #fff;">Machine List</div>
<svg style="left:603px;top:75px" width="9" height="11" viewBox="0 0 9 11"><rect x="2" y="0.5" width="5" height="5.5" fill="#666"/><rect x="2.5" y="1" width="1.3" height="4.5" fill="#aaa"/><rect x="0.3" y="6" width="8.4" height="1.5" fill="#555"/><rect x="3.8" y="7.3" width="1.4" height="3.5" fill="#555"/></svg>
<svg style="left:352px;top:100px" width="16" height="16" viewBox="0 0 16 16"><g opacity="1"><circle cx="8" cy="8" r="6.6" fill="#fff" stroke="#8c8c8c" stroke-width="1"/><circle cx="8" cy="8" r="5.2" fill="#2aa236"/><path d="M8 4.5v7M4.5 8h7" stroke="#fff" stroke-width="2.2"/></g></svg>
<svg style="left:374px;top:99px" width="18" height="18" viewBox="0 0 18 18"><defs><radialGradient id="gg" cx="0.4" cy="0.35" r="0.7"><stop offset="0" stop-color="#ffe08a"/><stop offset="1" stop-color="#d39a10"/></radialGradient></defs><g transform="translate(9 9)" fill="url(#gg)"><circle r="6"/><g id="gt"><rect x="-1.8" y="-8.3" width="3.6" height="3.8" rx="0.8"/></g><use href="#gt" transform="rotate(60)"/><use href="#gt" transform="rotate(120)"/><use href="#gt" transform="rotate(180)"/><use href="#gt" transform="rotate(240)"/><use href="#gt" transform="rotate(300)"/></g><circle cx="8" cy="7.5" r="1.6" fill="#3a2a10"/></svg>
<div class="a" style="left:363px;top:135px;width:246px;height:160px;border:1px solid #cfcfcf;background:#fff"></div>
<div class="a" style="left:364px;top:158px;width:121px;height:21px;background:#f2f2f2"></div>
<div class="a" style="left:486px;top:158px;width:122px;height:21px;background:#dcdcdc"></div>
<div class="a" style="left:364px;top:158px;width:244px;height:1px;background:#d2d2d2"></div>
<div class="a" style="left:364px;top:179px;width:244px;height:1px;background:#d2d2d2"></div>
<div class="a" style="left:485px;top:136px;width:1px;height:43px;background:#d6d6d6"></div>
<div class="t" style="left:367.44px;top:142.00px;font-size:12.3px;color:#1e1e1e;transform:scaleX(1.0068);transform-origin:0 0;">Operation</div>
<div class="t" style="left:489.00px;top:142.00px;font-size:12.3px;color:#1e1e1e;transform:scaleX(1.0121);transform-origin:0 0;">Machine</div>
<div class="t" style="left:368.00px;top:164.00px;font-size:12.3px;color:#1e1e1e;transform:scaleX(0.9687);transform-origin:0 0;">Auto Placement</div>
<div class="t" style="left:489.04px;top:164.00px;font-size:12.3px;color:#1e1e1e;transform:scaleX(0.9745);transform-origin:0 0;">Fuji Flexa</div>
<div class="a" style="left:358px;top:312px;width:280px;height:41px;background:linear-gradient(90deg,#ececec,#e4e4e4);border:1px solid #a9a9a9;border-right:2px solid #a9a9a9"></div>
<div class="a" style="left:367px;top:326px;width:14px;height:14px;background:#fff;border:1px solid #7a7a7a"></div>
<div class="t" style="left:416.72px;top:328.00px;font-size:12px;font-weight:bold;color:#2b2b2b;transform:scaleX(0.9981);transform-origin:0 0;">Board Geometry</div>
<div class="a" style="left:358px;top:352px;width:280px;height:41px;background:linear-gradient(90deg,#ececec,#e4e4e4);border:1px solid #a9a9a9;border-right:2px solid #a9a9a9"></div>
<div class="a" style="left:367px;top:366px;width:14px;height:14px;background:#fff;border:1px solid #7a7a7a"></div>
<div class="t" style="left:416.71px;top:368.00px;font-size:12px;font-weight:bold;color:#2b2b2b;transform:scaleX(1.0131);transform-origin:0 0;">Part Management &amp; Troubleshooting</div>
<div class="a" style="left:356px;top:392px;width:282px;height:41px;background:#fff;border:1px solid #a9a9a9;border-right:none"></div>
<div class="a" style="left:367px;top:406px;width:14px;height:14px;background:#fff;border:1px solid #7a7a7a"></div>
<svg style="left:368px;top:407px" width="12" height="12" viewBox="0 0 12 12"><path d="M2 6.5l2.8 3L10.5 2.5" fill="none" stroke="#222" stroke-width="2"/></svg>
<div class="t" style="left:417.21px;top:408.00px;font-size:12px;font-weight:bold;color:#2b2b2b;transform:scaleX(0.9814);transform-origin:0 0;">Angle Resolution</div>
<div class="a" style="left:358px;top:432px;width:280px;height:41px;background:linear-gradient(90deg,#ececec,#e4e4e4);border:1px solid #a9a9a9;border-right:2px solid #a9a9a9"></div>
<div class="a" style="left:367px;top:446px;width:14px;height:14px;background:#fff;border:1px solid #7a7a7a"></div>
<div class="t" style="left:416.73px;top:448.00px;font-size:12px;font-weight:bold;color:#2b2b2b;transform:scaleX(0.9893);transform-origin:0 0;">Program Transfer</div>
<div class="a" style="left:358px;top:472px;width:280px;height:41px;background:linear-gradient(90deg,#ececec,#e4e4e4);border:1px solid #a9a9a9;border-right:2px solid #a9a9a9"></div>
<div class="t" style="left:416.70px;top:488.00px;font-size:12px;font-weight:bold;color:#2b2b2b;transform:scaleX(1.0277);transform-origin:0 0;">Material Setup</div>
<div class="a" style="left:637px;top:312px;width:1px;height:541px;background:#a0a0a0"></div>
<div class="a" style="left:356px;top:812px;width:110px;height:38px;background:linear-gradient(180deg,#f0f0f0,#e5e5e5);border:1px solid #adadad"></div>
<div class="a" style="left:471px;top:812px;width:90px;height:38px;background:linear-gradient(180deg,#f0f0f0,#e5e5e5);border:1px solid #adadad"></div>
<svg style="left:372px;top:817px" width="27" height="27" viewBox="0 0 27 27"><rect x="0.5" y="0.5" width="26" height="26" rx="3" fill="#000"/><rect x="6" y="6" width="2.6" height="15" fill="#fff"/><path d="M20 6v15l-9.5-7.5z" fill="#fff"/></svg>
<svg style="left:489px;top:817px" width="26" height="27" viewBox="0 0 26 27"><rect x="0.5" y="0.5" width="25" height="26" rx="3" fill="#000"/><rect x="17.5" y="6" width="2.6" height="15" fill="#fff"/><path d="M7 6v15l9.5-7.5z" fill="#fff"/></svg>
<div class="t" style="left:403.23px;top:826.00px;font-size:12px;font-weight:bold;color:#333;transform:scaleX(0.9850);transform-origin:0 0;">Previous</div>
<div class="t" style="left:518.75px;top:826.00px;font-size:12px;font-weight:bold;color:#333;transform:scaleX(1.0925);transform-origin:0 0;">Next</div>
<div class="a" style="left:643px;top:63px;width:779px;height:220px;border-left:1px solid #a9a9a9;border-bottom:1px solid #a9a9a9"></div>
<div class="a" style="left:1422px;top:61px;width:2px;height:793px;background:#a9a9a9"></div>
<div class="t" style="left:654.84px;top:69.00px;font-size:12.3px;color:#1a1a1a;transform:scaleX(0.9747);transform-origin:0 0;">Machine Angle Correction Center</div>
<div class="a" style="left:644px;top:84px;width:778px;height:1px;background:#a9a9a9"></div>
<div class="a" style="left:648px;top:91px;width:34px;height:28px;border:1px solid #a6a6a6;background:#fff"></div>
<div class="a" style="left:648px;top:123px;width:34px;height:28px;border:1px solid #a6a6a6;background:#fff"></div>
<div class="a" style="left:648px;top:155px;width:34px;height:28px;border:1px solid #e3e3e3;background:#fff"></div>
<div class="a" style="left:648px;top:187px;width:34px;height:28px;border:1px solid #a6a6a6;background:#fff"></div>
<svg style="left:655px;top:95px" width="20" height="20" viewBox="0 0 20 20"><path d="M3 2v15h15.5" fill="none" stroke="#111" stroke-width="2.3"/><path d="M6.5 4.2C10 2.5 14.5 3.5 16 8.5" fill="none" stroke="#111" stroke-width="2.2"/><path d="M13 8.5h6l-2.8 4.5z" fill="#111"/></svg>
<svg style="left:655px;top:127px" width="20" height="20" viewBox="0 0 20 20"><path d="M3 2v15h15.5" fill="none" stroke="#111" stroke-width="2.3"/><circle cx="13" cy="9" r="4.6" fill="none" stroke="#111" stroke-width="2"/><path d="M10.5 9a2.5 2.5 0 0 1 4.5-1.5M15.5 9a2.5 2.5 0 0 1-4.5 1.5" fill="none" stroke="#111" stroke-width="1.2"/><path d="M14 6.5h2v-2zM12 11.5h-2v2z" fill="#111"/></svg>
<svg style="left:655px;top:159px" width="20" height="20" viewBox="0 0 20 20"><path d="M3 2v15h6" fill="none" stroke="#c6c6c6" stroke-width="1.8"/><path d="M9 5.5h8M15 3l2.5 2.5L15 8" fill="none" stroke="#c6c6c6" stroke-width="1.5"/><circle cx="14" cy="13.5" r="3.3" fill="none" stroke="#c6c6c6" stroke-width="1.8"/></svg>
<svg style="left:655px;top:191px" width="20" height="20" viewBox="0 0 20 20"><path d="M1.5 18.5l6.5-6.5" stroke="#111" stroke-width="1.8"/><path d="M6.5 9.5l4-1.5 3-3-0.5-2 1.5-1.5 6 6-1.5 1.5-2-0.5-3 3-1.5 4z" fill="#111"/><path d="M11.5 15l2 2.5 4.5-5" fill="none" stroke="#111" stroke-width="1.8"/></svg>
<div class="a" style="left:691px;top:90px;width:1px;height:187px;background:#b4b4b4"></div>
<div class="a" style="left:990px;top:90px;width:1px;height:187px;background:#b4b4b4"></div>
<div class="t" style="left:700.59px;top:93.00px;font-size:12.3px;color:#1e1e1e;transform:scaleX(1.0215);transform-origin:0 0;">Footprint</div>
<svg style="left:925px;top:91px" width="14" height="14" viewBox="0 0 14 14"><rect width="14" height="14" rx="2" fill="#000"/><rect x="3" y="3" width="1.6" height="8" fill="#fff"/><path d="M11 3v8L5.5 7z" fill="#fff"/></svg>
<svg style="left:959px;top:91px" width="14" height="14" viewBox="0 0 14 14"><rect width="14" height="14" rx="2" fill="#000"/><rect x="9.4" y="3" width="1.6" height="8" fill="#fff"/><path d="M3 3v8L8.5 7z" fill="#fff"/></svg>
<div class="a" style="left:701px;top:114px;width:280px;height:164px;border:1px solid #ababab;background:#fff"></div>
<div class="a" style="left:964px;top:115px;width:16px;height:162px;background:#efefef"></div>
<div class="a" style="left:964px;top:133px;width:16px;height:8px;background:#c1c1c1"></div>
<svg style="left:968px;top:120px" width="9" height="6" viewBox="0 0 9 6"><path d="M0.8 5.2L4.5 1.5 8.2 5.2" fill="none" stroke="#606060" stroke-width="1.5"/></svg>
<svg style="left:968px;top:265px" width="9" height="6" viewBox="0 0 9 6"><path d="M0.8 0.8L4.5 4.5 8.2 0.8" fill="none" stroke="#606060" stroke-width="1.5"/></svg>
<div class="a" style="left:703px;top:235px;width:259px;height:20px;background:#bcd6ec"></div>
<div class="t" style="left:705.12px;top:121.00px;font-size:12.3px;color:#222;transform:scaleX(0.8913);transform-origin:0 0;">MLQP16_REV1_U14</div>
<div class="t" style="left:705.09px;top:141.00px;font-size:12.3px;color:#222;transform:scaleX(0.9246);transform-origin:0 0;">MOLEX 51296-4594_J9</div>
<div class="t" style="left:705.09px;top:161.00px;font-size:12.3px;color:#222;transform:scaleX(0.9198);transform-origin:0 0;">MSOP8_U5</div>
<div class="t" style="left:705.47px;top:181.00px;font-size:12.3px;color:#222;transform:scaleX(0.9497);transform-origin:0 0;">QFN-32-0.5_U2</div>
<div class="t" style="left:705.49px;top:200.00px;font-size:12.3px;color:#222;transform:scaleX(0.9208);transform-origin:0 0;">QSOP24_U11</div>
<div class="t" style="left:705.50px;top:220.00px;font-size:12.3px;color:#222;transform:scaleX(0.8978);transform-origin:0 0;">QSOP24_U6</div>
<div class="t" style="left:705.50px;top:240.00px;font-size:12.3px;color:#222;transform:scaleX(0.8978);transform-origin:0 0;">QSOP24_U8</div>
<div class="t" style="left:705.50px;top:260.00px;font-size:12.3px;color:#222;transform:scaleX(0.8986);transform-origin:0 0;">QSOP24_U9</div>
<svg style="left:1007px;top:91px" width="18" height="17" viewBox="0 0 18 17"><path d="M3 10A5.8 5.8 0 0 1 13.5 5" fill="none" stroke="#111" stroke-width="2"/><path d="M10.5 6h5.5l-1-5z" fill="#111"/><text x="6.5" y="16.5" font-size="7.5" font-weight="bold" text-anchor="middle" font-family="Liberation Sans" fill="#111" transform="scale(1 1)">90</text></svg>
<svg style="left:1041px;top:91px" width="18" height="17" viewBox="0 0 18 17"><path d="M3 10A5.8 5.8 0 0 1 13.5 5" fill="none" stroke="#111" stroke-width="2"/><path d="M10.5 6h5.5l-1-5z" fill="#111"/><text x="8" y="16.5" font-size="7" font-weight="bold" text-anchor="middle" font-family="Liberation Sans" fill="#111" transform="scale(1 1)">180</text></svg>
<svg style="left:1075px;top:91px" width="18" height="17" viewBox="0 0 18 17"><path d="M3 10A5.8 5.8 0 0 1 13.5 5" fill="none" stroke="#111" stroke-width="2"/><path d="M10.5 6h5.5l-1-5z" fill="#111"/><text x="8" y="16.5" font-size="7" font-weight="bold" text-anchor="middle" font-family="Liberation Sans" fill="#111" transform="scale(1 1)">270</text></svg>
<div class="a" style="left:1102px;top:92px;width:1px;height:14px;background:#c8c8c8"></div>
<svg style="left:1117px;top:94px" width="10" height="12" viewBox="0 0 10 12"><path d="M1 2c4 0 6 2 6.5 5" fill="none" stroke="#111" stroke-width="1.8"/><path d="M4.5 6.5h6l-3 4.5z" fill="#111"/></svg>
<svg style="left:1148px;top:91px" width="16" height="16" viewBox="0 0 16 16"><circle cx="8" cy="8" r="6.6" fill="none" stroke="#111" stroke-width="2.2"/><path d="M4.3 8.5a3.8 3.8 0 0 1 6.8-2.2M11.7 7.5a3.8 3.8 0 0 1-6.8 2.2" fill="none" stroke="#111" stroke-width="1.7"/><path d="M9.5 4.5h3v3zM6.5 11.5h-3v-3z" fill="#111"/></svg>
<div class="a" style="left:1195px;top:87px;width:100px;height:24px;border:1px solid #b0b0b0;background:#fff"></div>
<svg style="left:1202px;top:90px" width="20" height="18" viewBox="0 0 20 18"><path d="M1.5 17l6.5-6.5" stroke="#111" stroke-width="1.8"/><path d="M6 8.5l4-1.5 3-3-0.5-2 1.5-1.5 6 6-1.5 1.5-2-0.5-3 3-1.5 4z" fill="#111"/><path d="M11 14l2 2.5 4.5-5" fill="none" stroke="#111" stroke-width="1.7"/></svg>
<div class="t" style="left:1227.38px;top:94.00px;font-size:12.3px;color:#222;transform:scaleX(1.0073);transform-origin:0 0;">Confirm</div>
<svg style="left:1394px;top:92px" width="17" height="16" viewBox="0 0 17 16"><g fill="#111"><circle cx="5.5" cy="5.5" r="4"/><g transform="translate(5.5 5.5)"><rect id="g1" x="-1" y="-5.5" width="2" height="11"/><use href="#g1" transform="rotate(45)"/><use href="#g1" transform="rotate(90)"/><use href="#g1" transform="rotate(135)"/></g></g><circle cx="5.5" cy="5.5" r="1.6" fill="#fff"/><circle cx="12.5" cy="5" r="2.2" fill="none" stroke="#111" stroke-width="1.4"/><circle cx="12.5" cy="5" r="3.2" fill="none" stroke="#111" stroke-width="1.3" stroke-dasharray="1.2 1.3"/><circle cx="11" cy="12" r="2.2" fill="none" stroke="#111" stroke-width="1.4"/><circle cx="11" cy="12" r="3.2" fill="none" stroke="#111" stroke-width="1.3" stroke-dasharray="1.2 1.3"/></svg>
<div class="t" style="left:999.78px;top:121.00px;font-size:12.3px;color:#222;transform:scaleX(0.9308);transform-origin:0 0;">Reference Feature</div>
<div class="t" style="left:1000.12px;top:150.00px;font-size:12.3px;color:#222;transform:scaleX(0.9410);transform-origin:0 0;">CAD Angle</div>
<div class="t" style="left:999.73px;top:178.00px;font-size:12.3px;color:#222;transform:scaleX(0.9855);transform-origin:0 0;">Machine Angle</div>
<div class="t" style="left:999.73px;top:206.00px;font-size:12.3px;color:#222;transform:scaleX(0.9851);transform-origin:0 0;">Features Affected</div>
<div class="t" style="left:999.80px;top:231.00px;font-size:12.3px;color:#222;transform:scaleX(0.9194);transform-origin:0 0;">Package Link</div>
<div class="a" style="left:1099px;top:115px;width:267px;height:22px;border:1px solid #a6a6a6;background:#fff"></div>
<div class="a" style="left:1348px;top:117px;width:16px;height:18px;border:1px solid #b4b4b4;background:#e8e8e8"></div>
<svg style="left:1352px;top:124px" width="9" height="5" viewBox="0 0 9 5"><path d="M0.8 0.8L4.5 4.2 8.2 0.8" fill="none" stroke="#666" stroke-width="1.3"/></svg>
<div class="a" style="left:1099px;top:143px;width:267px;height:22px;border:1px solid #a6a6a6;background:#fff"></div>
<div class="a" style="left:1099px;top:171px;width:256px;height:22px;border:1px solid #a6a6a6;background:#fff"></div>
<div class="a" style="left:1099px;top:199px;width:290px;height:22px;border:1px solid #a6a6a6;background:#fff"></div>
<div class="a" style="left:1371px;top:201px;width:17px;height:18px;border:1px solid #b4b4b4;background:#e8e8e8"></div>
<svg style="left:1375px;top:208px" width="9" height="5" viewBox="0 0 9 5"><path d="M0.8 0.8L4.5 4.2 8.2 0.8" fill="none" stroke="#666" stroke-width="1.3"/></svg>
<div class="a" style="left:1099px;top:225px;width:290px;height:22px;border:1px solid #a6a6a6;background:#fff"></div>
<div class="t" style="left:1103.79px;top:121.00px;font-size:12.3px;color:#222;transform:scaleX(0.9812);transform-origin:0 0;">U8</div>
<div class="t" style="left:1103.82px;top:150.00px;font-size:12.3px;color:#222;transform:scaleX(0.9525);transform-origin:0 0;">180.0</div>
<div class="t" style="left:1103.82px;top:178.00px;font-size:12.3px;color:#222;transform:scaleX(0.9525);transform-origin:0 0;">180.0</div>
<div class="t" style="left:1103.79px;top:206.00px;font-size:12.3px;color:#222;transform:scaleX(0.9812);transform-origin:0 0;">U8</div>
<div class="t" style="left:1369.75px;top:118.00px;font-size:12.3px;color:#222;transform:scaleX(0.9966);transform-origin:0 0;">Top</div>
<div class="t" style="left:1369.41px;top:146.00px;font-size:12.3px;color:#222;transform:scaleX(0.9595);transform-origin:0 0;">CW</div>
<svg style="left:1365px;top:175px" width="16" height="16" viewBox="0 0 16 16"><path d="M12.5 5A5.5 5.5 0 1 0 13 11" fill="none" stroke="#111" stroke-width="2"/><path d="M9.5 2.5l4.5-1.5-0.5 5z" fill="#111"/><path d="M3 11l-2 4 4-1z" fill="#111"/><circle cx="8" cy="8" r="1.5" fill="#111"/></svg>
<div class="a" style="left:1000px;top:256px;width:389px;height:1px;background:#b8b8b8"></div>
<div class="a" style="left:1000px;top:264px;width:10px;height:10px;background:#008000"></div>
<div class="t" style="left:1014.39px;top:264.00px;font-size:12.3px;color:#222;transform:scaleX(0.9948);transform-origin:0 0;">Confirmed</div>
<div class="t" style="left:1075.97px;top:264.00px;font-size:12.3px;color:#222;transform:scaleX(1.1214);transform-origin:0 0;">1</div>
<div class="a" style="left:1105px;top:264px;width:10px;height:10px;background:#0000ff"></div>
<div class="t" style="left:1119.07px;top:264.00px;font-size:12.3px;color:#222;transform:scaleX(1.0115);transform-origin:0 0;">Unconfirmed</div>
<div class="t" style="left:1194.06px;top:264.00px;font-size:12.3px;color:#222;transform:scaleX(1.0163);transform-origin:0 0;">144</div>
<div class="a" style="left:1230px;top:264px;width:10px;height:10px;background:#ff0000"></div>
<div class="t" style="left:1244.06px;top:264.00px;font-size:12.3px;color:#222;transform:scaleX(0.9519);transform-origin:0 0;">Errors</div>
<div class="t" style="left:1281.46px;top:264.00px;font-size:12.3px;color:#222;transform:scaleX(1.1009);transform-origin:0 0;">0</div>
<div class="a" style="left:646px;top:312px;width:776px;height:1px;background:#c6c6c6"></div>
<div class="a" style="left:646px;top:312px;width:1px;height:515px;background:#c6c6c6"></div>
<div class="a" id="map" style="left:647px;top:313px;width:758px;height:498px;overflow:hidden;background:#fff">
<svg style="left:0;top:0" width="758" height="498" viewBox="647 313 758 498"><rect x="687" y="300" width="3.5" height="510" fill="#000"/><rect x="864.6" y="769" width="1.1999999999999318" height="41" fill="#000"/><text x="719.9666666666667" y="331" font-size="30" font-family="Liberation Sans" fill="#000" transform="translate(719.9666666666667 0) scale(0.8889 1) translate(-719.9666666666667 0)">TP31</text><rect x="720" y="338.5" width="67.5" height="132.0" fill="#000"/><rect x="722.6" y="341.1" width="62.3" height="126.8" fill="#0000ff"/><rect x="722.6" y="354" width="62.299999999999955" height="101.19999999999999" fill="#ff0000"/><text x="811.9645669291339" y="329.5" font-size="32" font-family="Liberation Sans" fill="#000" transform="translate(811.9645669291339 0) scale(0.9596 1) translate(-811.9645669291339 0)">C</text><rect x="840.6" y="290" width="80.19999999999993" height="41.30000000000001" fill="#000"/><rect x="843.2" y="292.6" width="74.99999999999993" height="36.10000000000001" fill="#0000ff"/><rect x="851" y="300" width="24" height="22" fill="#ff0000"/><rect x="887" y="300" width="25" height="22" fill="#000"/><rect x="808.5" y="334.2" width="97.79999999999995" height="136.40000000000003" fill="#000"/><rect x="811.1" y="336.8" width="92.59999999999995" height="131.20000000000005" fill="#0000ff"/><rect x="825.4" y="356" width="18.600000000000023" height="29.399999999999977" fill="#000"/><rect x="825.4" y="422.3" width="18.600000000000023" height="29.0" fill="#000"/><rect x="849.5" y="356" width="18.5" height="29.399999999999977" fill="#000"/><rect x="849.5" y="422.3" width="18.5" height="29.0" fill="#000"/><rect x="873.7" y="356" width="18.299999999999955" height="29.399999999999977" fill="#ff0000"/><rect x="873.7" y="422.3" width="18.299999999999955" height="29.0" fill="#000"/><text x="906.4767441860465" y="418.7" font-size="45.3" font-family="Liberation Sans" fill="#000" transform="translate(906.4767441860465 0) scale(1.0370 1) translate(-906.4767441860465 0)">U13</text><rect x="828.5" y="461.7" width="80.70000000000005" height="47.60000000000002" fill="#000"/><rect x="831.1" y="464.3" width="75.50000000000004" height="42.40000000000002" fill="#0000ff"/><rect x="831.1" y="468" width="75.5" height="2.6000000000000227" fill="#000"/><rect x="838.2" y="471.4" width="25.09999999999991" height="28.200000000000045" fill="#ff0000"/><rect x="874.9" y="471.4" width="24.100000000000023" height="28.200000000000045" fill="#000"/><text x="909.591452991453" y="499.6" font-size="41" font-family="Liberation Sans" fill="#000" transform="translate(909.591452991453 0) scale(0.9798 1) translate(-909.591452991453 0)">C34</text><rect x="988.3" y="290" width="48.5" height="39.80000000000001" fill="#000"/><rect x="990.9" y="292.6" width="43.3" height="34.60000000000001" fill="#0000ff"/><rect x="998" y="300" width="28" height="20" fill="#ff0000"/><text x="988.7319884726224" y="354.8" font-size="25.8" font-family="Liberation Sans" fill="#000" transform="translate(988.7319884726224 0) scale(0.9830 1) translate(-988.7319884726224 0)">C27</text><text x="1037.9985507246377" y="340.7" font-size="41" font-family="Liberation Sans" fill="#000" transform="translate(1037.9985507246377 0) scale(1.0675 1) translate(-1037.9985507246377 0)">R24</text><rect x="801.7" y="551" width="178.29999999999995" height="200.70000000000005" fill="#000"/><rect x="804.3000000000001" y="553.6" width="173.09999999999997" height="195.50000000000006" fill="#0000ff"/><rect x="810.7" y="553.3" width="15.200000000000045" height="46.700000000000045" fill="#000"/><rect x="810.7" y="702.7" width="15.200000000000045" height="45.59999999999991" fill="#ff0000"/><rect x="827.0300000000001" y="553.3" width="15.200000000000045" height="46.700000000000045" fill="#000"/><rect x="827.0300000000001" y="702.7" width="15.200000000000045" height="45.59999999999991" fill="#000"/><rect x="843.36" y="553.3" width="15.200000000000045" height="46.700000000000045" fill="#000"/><rect x="843.36" y="702.7" width="15.200000000000045" height="45.59999999999991" fill="#000"/><rect x="859.69" y="553.3" width="15.200000000000045" height="46.700000000000045" fill="#000"/><rect x="859.69" y="702.7" width="15.200000000000045" height="45.59999999999991" fill="#000"/><rect x="876.02" y="553.3" width="15.200000000000045" height="46.700000000000045" fill="#000"/><rect x="876.02" y="702.7" width="15.200000000000045" height="45.59999999999991" fill="#000"/><rect x="892.35" y="553.3" width="15.200000000000045" height="46.700000000000045" fill="#000"/><rect x="892.35" y="702.7" width="15.200000000000045" height="45.59999999999991" fill="#000"/><rect x="908.6800000000001" y="553.3" width="15.200000000000045" height="46.700000000000045" fill="#000"/><rect x="908.6800000000001" y="702.7" width="15.200000000000045" height="45.59999999999991" fill="#000"/><rect x="925.01" y="553.3" width="15.200000000000045" height="46.700000000000045" fill="#000"/><rect x="925.01" y="702.7" width="15.200000000000045" height="45.59999999999991" fill="#000"/><rect x="941.34" y="553.3" width="15.200000000000045" height="46.700000000000045" fill="#000"/><rect x="941.34" y="702.7" width="15.200000000000045" height="45.59999999999991" fill="#000"/><rect x="957.6700000000001" y="553.3" width="15.200000000000045" height="46.700000000000045" fill="#000"/><rect x="957.6700000000001" y="702.7" width="15.200000000000045" height="45.59999999999991" fill="#000"/><text x="847.6632653061224" y="666.7" font-size="45" font-family="Liberation Sans" fill="#000" transform="translate(847.6632653061224 0) scale(0.9887 1) translate(-847.6632653061224 0)">U21</text><rect x="746" y="605" width="48" height="80" fill="#000"/><rect x="748.6" y="607.6" width="42.8" height="74.8" fill="#0000ff"/><rect x="755.7" y="615" width="28.299999999999955" height="24" fill="#000"/><rect x="755.7" y="650.7" width="28.299999999999955" height="24.299999999999955" fill="#ff0000"/><text x="745.735632183908" y="596.7" font-size="24.7" font-family="Liberation Sans" fill="#000" transform="translate(745.735632183908 0) scale(1.0238 1) translate(-745.735632183908 0)">C51</text><rect x="980" y="608.3" width="46.700000000000045" height="81.0" fill="#000"/><rect x="982.6" y="610.9" width="41.50000000000004" height="75.8" fill="#0000ff"/><rect x="989.3" y="618.3" width="29.0" height="24.40000000000009" fill="#ff0000"/><rect x="989.3" y="655" width="29.0" height="24.299999999999955" fill="#000"/><text x="979.7319884726224" y="600.7" font-size="24.7" font-family="Liberation Sans" fill="#000" transform="translate(979.7319884726224 0) scale(1.0267 1) translate(-979.7319884726224 0)">C52</text><rect x="1026.8" y="548.4" width="213.70000000000005" height="196.39999999999998" fill="#000"/><rect x="1029.3999999999999" y="551.0" width="208.50000000000006" height="191.2" fill="#008000"/><rect x="1039.3" y="557.7" width="10.5" height="48.799999999999955" fill="#000"/><rect x="1039.3" y="690.4" width="10.5" height="48.80000000000007" fill="#000"/><rect x="1055.45" y="557.7" width="10.5" height="48.799999999999955" fill="#000"/><rect x="1055.45" y="690.4" width="10.5" height="48.80000000000007" fill="#000"/><rect x="1071.6" y="557.7" width="10.5" height="48.799999999999955" fill="#000"/><rect x="1071.6" y="690.4" width="10.5" height="48.80000000000007" fill="#000"/><rect x="1087.75" y="557.7" width="10.5" height="48.799999999999955" fill="#000"/><rect x="1087.75" y="690.4" width="10.5" height="48.80000000000007" fill="#000"/><rect x="1103.8999999999999" y="557.7" width="10.5" height="48.799999999999955" fill="#000"/><rect x="1103.8999999999999" y="690.4" width="10.5" height="48.80000000000007" fill="#000"/><rect x="1120.05" y="557.7" width="10.5" height="48.799999999999955" fill="#000"/><rect x="1120.05" y="690.4" width="10.5" height="48.80000000000007" fill="#000"/><rect x="1136.2" y="557.7" width="10.5" height="48.799999999999955" fill="#000"/><rect x="1136.2" y="690.4" width="10.5" height="48.80000000000007" fill="#000"/><rect x="1152.35" y="557.7" width="10.5" height="48.799999999999955" fill="#000"/><rect x="1152.35" y="690.4" width="10.5" height="48.80000000000007" fill="#000"/><rect x="1168.5" y="557.7" width="10.5" height="48.799999999999955" fill="#000"/><rect x="1168.5" y="690.4" width="10.5" height="48.80000000000007" fill="#000"/><rect x="1184.6499999999999" y="557.7" width="10.5" height="48.799999999999955" fill="#000"/><rect x="1184.6499999999999" y="690.4" width="10.5" height="48.80000000000007" fill="#000"/><rect x="1200.8" y="557.7" width="10.5" height="48.799999999999955" fill="#000"/><rect x="1200.8" y="690.4" width="10.5" height="48.80000000000007" fill="#000"/><rect x="1216.9499999999998" y="557.7" width="10.5" height="48.799999999999955" fill="#ff0000"/><rect x="1216.9499999999998" y="690.4" width="10.5" height="48.80000000000007" fill="#000"/><text x="1101.8793103448277" y="536.6" font-size="46.2" font-family="Liberation Sans" fill="#000" transform="translate(1101.8793103448277 0) scale(1.0449 1) translate(-1101.8793103448277 0)">U6</text><rect x="1246.8" y="540.9" width="48.200000000000045" height="79.80000000000007" fill="#000"/><rect x="1249.3999999999999" y="543.5" width="43.00000000000004" height="74.60000000000007" fill="#0000ff"/><rect x="1256.7" y="550" width="28.299999999999955" height="25" fill="#000"/><rect x="1256.7" y="586" width="28.299999999999955" height="24.799999999999955" fill="#ff0000"/><text x="1246.7106017191977" y="532.3" font-size="25.5" font-family="Liberation Sans" fill="#000" transform="translate(1246.7106017191977 0) scale(1.0113 1) translate(-1246.7106017191977 0)">C16</text><rect x="1247" y="669.8" width="48" height="80.20000000000005" fill="#000"/><rect x="1249.6" y="672.4" width="42.8" height="75.00000000000004" fill="#0000ff"/><rect x="1256.7" y="679.7" width="28.299999999999955" height="24.299999999999955" fill="#ff0000"/><rect x="1256.7" y="715.8" width="28.299999999999955" height="23.90000000000009" fill="#000"/><text x="1246.7142857142858" y="661" font-size="25" font-family="Liberation Sans" fill="#000" transform="translate(1246.7142857142858 0) scale(1.0286 1) translate(-1246.7142857142858 0)">C30</text><rect x="1302" y="548.7" width="158" height="195.69999999999993" fill="#000"/><rect x="1304.6" y="551.3000000000001" width="152.8" height="190.49999999999994" fill="#0000ff"/><rect x="1314.0" y="558.1" width="10.400000000000091" height="48.39999999999998" fill="#000"/><rect x="1314.0" y="690.4" width="10.400000000000091" height="48.80000000000007" fill="#000"/><rect x="1330.2" y="558.1" width="10.400000000000091" height="48.39999999999998" fill="#000"/><rect x="1330.2" y="690.4" width="10.400000000000091" height="48.80000000000007" fill="#000"/><rect x="1346.4" y="558.1" width="10.400000000000091" height="48.39999999999998" fill="#000"/><rect x="1346.4" y="690.4" width="10.400000000000091" height="48.80000000000007" fill="#000"/><rect x="1362.6" y="558.1" width="10.400000000000091" height="48.39999999999998" fill="#000"/><rect x="1362.6" y="690.4" width="10.400000000000091" height="48.80000000000007" fill="#000"/><rect x="1378.8" y="558.1" width="10.400000000000091" height="48.39999999999998" fill="#000"/><rect x="1378.8" y="690.4" width="10.400000000000091" height="48.80000000000007" fill="#000"/><rect x="1395.0" y="558.1" width="10.400000000000091" height="48.39999999999998" fill="#000"/><rect x="1395.0" y="690.4" width="10.400000000000091" height="48.80000000000007" fill="#000"/><text x="1378.09" y="537.2" font-size="46.8" font-family="Liberation Sans" fill="#000" transform="translate(1378.09 0) scale(1.0000 1) translate(-1378.09 0)">U</text></svg>
</div>
<div class="a" style="left:1405px;top:313px;width:17px;height:498px;background:#efefef"></div>
<div class="a" style="left:1405px;top:431px;width:16px;height:161px;background:#c1c1c1"></div>
<svg style="left:1409px;top:319px" width="9" height="6" viewBox="0 0 9 6"><path d="M0.8 5.2L4.5 1.5 8.2 5.2" fill="none" stroke="#606060" stroke-width="1.5"/></svg>
<svg style="left:1409px;top:798px" width="9" height="6" viewBox="0 0 9 6"><path d="M0.8 0.8L4.5 4.5 8.2 0.8" fill="none" stroke="#606060" stroke-width="1.5"/></svg>
<div class="a" style="left:647px;top:811px;width:775px;height:16px;background:#efefef"></div>
<div class="a" style="left:664px;top:811px;width:152px;height:15px;background:#c1c1c1"></div>
<svg style="left:651px;top:815px" width="6" height="9" viewBox="0 0 6 9"><path d="M5.2 0.8L1.5 4.5 5.2 8.2" fill="none" stroke="#606060" stroke-width="1.5"/></svg>
<svg style="left:1393px;top:815px" width="6" height="9" viewBox="0 0 6 9"><path d="M0.8 0.8L4.5 4.5 0.8 8.2" fill="none" stroke="#606060" stroke-width="1.5"/></svg>
<div class="a" style="left:1385px;top:788px;width:19px;height:20px;border:1px solid #a9a9a9;background:#ececec"></div>
<svg style="left:1388px;top:791px" width="13" height="13" viewBox="0 0 13 13"><circle cx="6.5" cy="6.5" r="5.8" fill="#ddd" stroke="#888" stroke-width="0.8"/><circle cx="6.5" cy="6.5" r="4.2" fill="#2a9a3a"/><path d="M4.5 4.5l4 4M4.5 4.5h2.5M4.5 4.5v2.5" stroke="#fff" stroke-width="1.3"/></svg>
<div class="a" style="left:647px;top:827px;width:775px;height:24px;background:#0070c5"></div>
<div class="t" style="left:650.31px;top:834.00px;font-size:12.3px;color:#fff;transform:scaleX(0.9307);transform-origin:0 0;">(0.4656 , 2.0654) Inches</div>
<svg style="left:1155px;top:829px" width="270" height="20" viewBox="0 0 270 20"><path d="M9.5 9V5.5a3.3 3.3 0 0 1 6.6 0V8" fill="none" stroke="#ddd" stroke-width="1.7"/><rect x="2" y="9" width="12" height="8" rx="1" fill="#f3c21a" stroke="#444" stroke-width="0.8"/><path d="M3 16l3-6M7 16l3-6M11 16l2.5-5" stroke="#222" stroke-width="1.4"/><rect x="24.5" y="2.5" width="15" height="15" fill="none" stroke="#3a3a3a" stroke-dasharray="2 1.6"/><circle cx="33" cy="8" r="4.3" fill="#cfe5f5" stroke="#a08a50" stroke-width="1.3"/><path d="M30.5 11l-4 4.5" stroke="#e0b860" stroke-width="2.8" stroke-linecap="round"/><circle cx="32" cy="7" r="1.5" fill="#fff"/><text x="49" y="9" font-size="9" font-weight="bold" fill="#505050" font-family="Liberation Sans">100</text><circle cx="55" cy="11" r="4.3" fill="#cfe5f5" stroke="#a08a50" stroke-width="1.3"/><path d="M52.5 14l-4 4.5" stroke="#e0b860" stroke-width="2.8" stroke-linecap="round"/><circle cx="54" cy="10" r="1.5" fill="#fff"/><text x="71" y="9" font-size="9" font-weight="bold" fill="#505050" font-family="Liberation Sans">ALL</text><circle cx="78" cy="11" r="4.3" fill="#cfe5f5" stroke="#a08a50" stroke-width="1.3"/><path d="M75.5 14l-4 4.5" stroke="#e0b860" stroke-width="2.8" stroke-linecap="round"/><circle cx="77" cy="10" r="1.5" fill="#fff"/><rect x="101" y="3.5" width="6" height="2" fill="#000"/><rect x="108" y="3.5" width="6" height="2" fill="#000"/><circle cx="99.5" cy="11" r="4.3" fill="#cfe5f5" stroke="#a08a50" stroke-width="1.3"/><path d="M102 14l4 4.5" stroke="#e0b860" stroke-width="2.8" stroke-linecap="round"/><circle cx="98.5" cy="10" r="1.5" fill="#fff"/><rect x="125" y="4.5" width="8" height="2" fill="#555"/><circle cx="121.5" cy="11" r="4.3" fill="#cfe5f5" stroke="#a08a50" stroke-width="1.3"/><path d="M124 14l4 4.5" stroke="#e0b860" stroke-width="2.8" stroke-linecap="round"/><circle cx="120.5" cy="10" r="1.5" fill="#fff"/></svg>
<div class="a" style="left:1313px;top:829px;width:57px;height:20px;background:#fff;border:1px solid #d0d0d0"></div>
<div class="t" style="left:1317.83px;top:834.00px;font-size:12.3px;color:#333;transform:scaleX(0.9198);transform-origin:0 0;">674%</div>
<div class="a" style="left:1354px;top:830px;width:15px;height:18px;border:1px solid #a0a0a0;background:#eee"></div>
<svg style="left:1357px;top:832px" width="9" height="14" viewBox="0 0 9 14"><path d="M0.8 5L4.5 1.3 8.2 5M0.8 9L4.5 12.7 8.2 9" fill="none" stroke="#777" stroke-width="1.2"/></svg>
<svg style="left:1376px;top:829px" width="48" height="20" viewBox="0 0 48 20"><circle cx="7.5" cy="11" r="4.3" fill="#cfe5f5" stroke="#a08a50" stroke-width="1.3"/><path d="M10 14l4 4.5" stroke="#e0b860" stroke-width="2.8" stroke-linecap="round"/><circle cx="6.5" cy="10" r="1.5" fill="#fff"/><path d="M12 5h8M16 1v8" stroke="#4a4a4a" stroke-width="2.2"/><circle cx="30.5" cy="11" r="4.3" fill="#cfe5f5" stroke="#a08a50" stroke-width="1.3"/><path d="M33 14l4 4.5" stroke="#e0b860" stroke-width="2.8" stroke-linecap="round"/><circle cx="29.5" cy="10" r="1.5" fill="#fff"/><path d="M28 4h7M31.5 0.5v7M36 4h7M39.5 0.5v7" stroke="#000" stroke-width="2.2"/></svg>
<div class="a" style="left:647px;top:851px;width:775px;height:1px;background:#fff"></div>
<div class="a" style="left:637px;top:852px;width:787px;height:2px;background:#b4b4b4"></div>
</body></html>
